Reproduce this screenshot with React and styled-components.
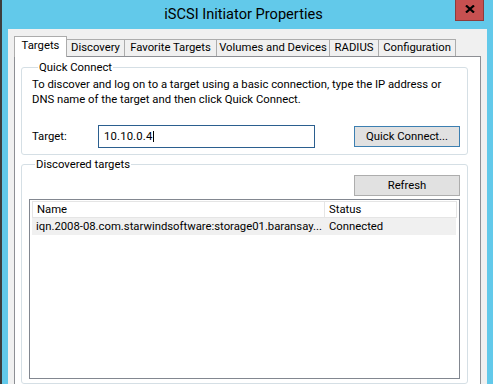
import React from "react";
import styled, { createGlobalStyle } from "styled-components";

const GlobalStyle = createGlobalStyle`
  html, body {
    margin: 0;
    padding: 0;
    overflow: hidden;
    background: #62c9ea;
  }
  body {
    font-family: Roboto, "Noto Sans", sans-serif;
    font-size: 11.3px;
    color: #000;
  }
`;

const Window = styled.div`
  box-sizing: border-box;
  width: 493px;
  height: 384px;
  background: #62c9ea;
  border-left: 2px solid #3d3d3d;
  display: flex;
  flex-direction: column;
  overflow: hidden;
`;

const TitleBar = styled.div`
  height: 29px;
  flex: none;
  display: grid;
  grid-template-columns: 1fr auto 1fr;
  align-items: start;
  padding-right: 9px;
`;

const Title = styled.div`
  grid-column: 2;
  font-size: 14.6px;
  line-height: 20px;
  padding-top: 4px;
  padding-left: 1px;
  color: #000;
  white-space: nowrap;
`;

const CloseButton = styled.div`
  grid-column: 3;
  justify-self: end;
  box-sizing: border-box;
  width: 29px;
  height: 21px;
  background: #c75050;
  border: 1px solid #8e3b3b;
  border-top: none;
  display: flex;
  align-items: center;
  justify-content: center;
  padding-bottom: 3px;
`;

const Client = styled.div`
  flex: 1;
  min-height: 0;
  margin: 0 6px;
  background: #f0f0f0;
  padding: 7px 6px 0 6px;
  display: flex;
  flex-direction: column;
`;

const TabList = styled.div`
  display: flex;
  align-items: flex-end;
  height: 20px;
  flex: none;
`;

const Tab = styled.div`
  box-sizing: border-box;
  width: ${({ $w }) => $w}px;
  height: ${({ $active }) => ($active ? 21 : 17)}px;
  margin-bottom: ${({ $active }) => ($active ? -1 : 0)}px;
  margin-left: ${({ $first }) => ($first ? 0 : -1)}px;
  position: relative;
  z-index: ${({ $active }) => ($active ? 2 : 1)};
  background: ${({ $active }) => ($active ? "#fff" : "#f0f0f0")};
  border: 1px solid #acacac;
  border-bottom: none;
  text-align: center;
  line-height: ${({ $active }) => ($active ? 18 : 16)}px;
  white-space: nowrap;
`;

const Panel = styled.div`
  flex: 1;
  box-sizing: border-box;
  background: #fff;
  border: 1px solid #8d8f94;
  border-bottom: none;
  padding: 0 12px 0 6px;
  display: flex;
  flex-direction: column;
`;

const Group = styled.fieldset`
  margin: ${({ $top }) => $top}px 0 0 0;
  padding: ${({ $pad }) => $pad};
  border: 1px solid #d5dfe5;
  border-radius: 3px;
  min-width: 0;
  ${({ $grow }) => ($grow ? "flex: 1;" : "")}
`;

const Legend = styled.legend`
  margin-left: 6px;
  padding: 0 1px;
  line-height: 15px;
`;

const Description = styled.p`
  margin: 0;
  line-height: 15px;
`;

const TargetRow = styled.div`
  display: flex;
  align-items: center;
  margin-top: 18px;
`;

const Label = styled.label`
  width: 66px;
  flex: none;
`;

const Input = styled.div`
  box-sizing: border-box;
  width: 217px;
  height: 23px;
  border: 1px solid #2b5f8f;
  background: #fff;
  display: flex;
  align-items: center;
  padding-left: 5px;
  letter-spacing: 0.15px;
`;

const Caret = styled.span`
  display: inline-block;
  width: 1px;
  height: 11px;
  background: #000;
  margin-left: 1px;
`;

const Button = styled.button`
  box-sizing: border-box;
  width: 106px;
  height: 21px;
  margin-left: auto;
  padding: 0;
  background: #e1e1e1;
  border: 1px solid ${({ $default }) => ($default ? "#3c7fb1" : "#adadad")};
  font: inherit;
  color: #000;
  line-height: 18px;
`;

const ToolbarRow = styled.div`
  display: flex;
`;

const List = styled.div`
  box-sizing: border-box;
  height: 180px;
  margin-top: 3px;
  border: 1px solid #828790;
  background: #fff;
  padding: 1px 1px 0 2px;
`;

const HeaderRow = styled.div`
  display: flex;
  height: 17px;
`;

const HeaderCell = styled.div`
  box-sizing: border-box;
  width: ${({ $w }) => $w}px;
  border: 1px solid #e5e5e5;
  margin-left: ${({ $first }) => ($first ? 0 : -1)}px;
  padding-left: ${({ $pl }) => $pl}px;
  line-height: 15px;
  white-space: nowrap;
`;

const Row = styled.div`
  display: flex;
  height: 17px;
  background: #f0f0f0;
  width: 424px;
`;

const Cell = styled.div`
  box-sizing: border-box;
  width: ${({ $w }) => $w}px;
  padding-left: ${({ $pl }) => $pl}px;
  line-height: 17px;
  white-space: nowrap;
  overflow: hidden;
`;

const tabs = [
  { label: "Targets", w: 53 },
  { label: "Discovery", w: 59 },
  { label: "Favorite Targets", w: 93 },
  { label: "Volumes and Devices", w: 114 },
  { label: "RADIUS", w: 50 },
  { label: "Configuration", w: 78 },
];

export default function App() {
  return (
    <>
      <GlobalStyle />
      <Window>
        <TitleBar>
          <Title>iSCSI Initiator Properties</Title>
          <CloseButton>
            <svg width="10" height="8" viewBox="0 0 10 8">
              <path d="M1 0.5 L9 7.5 M9 0.5 L1 7.5" stroke="#000" strokeWidth="2.2" />
            </svg>
          </CloseButton>
        </TitleBar>
        <Client>
          <TabList>
            {tabs.map((t, i) => (
              <Tab key={t.label} $w={t.w} $active={i === 0} $first={i === 0}>
                {t.label}
              </Tab>
            ))}
          </TabList>
          <Panel>
            <Group $top={3} $pad="2px 7px 6px 10px">
              <Legend>Quick Connect</Legend>
              <Description>
                To discover and log on to a target using a basic connection, type the IP address or
                <br />
                DNS name of the target and then click Quick Connect.
              </Description>
              <TargetRow>
                <Label>Target:</Label>
                <Input>
                  10.10.0.4
                  <Caret />
                </Input>
                <Button $default>Quick Connect...</Button>
              </TargetRow>
            </Group>
            <Group $top={2} $pad="3px 7px 0 7px" $grow>
              <Legend>Discovered targets</Legend>
              <ToolbarRow>
                <Button>Refresh</Button>
              </ToolbarRow>
              <List>
                <HeaderRow>
                  <HeaderCell $w={293} $first $pl={4}>Name</HeaderCell>
                  <HeaderCell $w={133} $pl={4}>Status</HeaderCell>
                </HeaderRow>
                <Row>
                  <Cell $w={292} $pl={4}>iqn.2008-08.com.starwindsoftware:storage01.baransay...</Cell>
                  <Cell $w={132} $pl={5}>Connected</Cell>
                </Row>
              </List>
            </Group>
          </Panel>
        </Client>
      </Window>
    </>
  );
}
